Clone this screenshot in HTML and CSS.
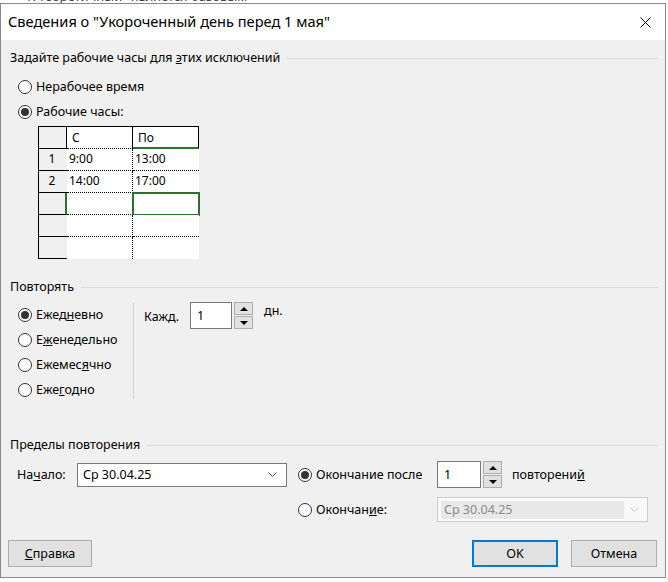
FILE: index.html
```html
<!DOCTYPE html>
<html lang="ru">
<head>
<meta charset="utf-8">
<title>Сведения</title>
<link rel="stylesheet" href="styles.css">
</head>
<body>
<div class="behind"><span>"К теоретичный" является базовым</span></div>
<div class="dialog">
  <div class="titlebar">
    <div class="title">Сведения о "Укороченный день перед 1 мая"</div>
    <svg class="close" width="11" height="11" viewBox="0 0 11 11"><path d="M0.5 0.5L10.5 10.5M10.5 0.5L0.5 10.5" stroke="#000" stroke-width="1" fill="none"/></svg>
  </div>
  <div class="body">
    <div class="group-head"><span>Задайте рабочие часы для <u>э</u>тих исключений</span><i class="rule"></i></div>
    <div class="radios g1">
      <div class="radio"><span class="dot"></span>Нерабочее время</div>
      <div class="radio on"><span class="dot"></span>Рабочие часы:</div>
    </div>
    <div class="grid">
      <div class="c corner"></div>
      <div class="c hd">С</div>
      <div class="c hd last sel-col">По</div>

      <div class="c rh">1</div>
      <div class="c d">9:00</div>
      <div class="c d last">13:00</div>

      <div class="c rh">2</div>
      <div class="c d">14:00</div>
      <div class="c d last">17:00</div>

      <div class="c rh sel-row"></div>
      <div class="c d"></div>
      <div class="c d last sel"></div>

      <div class="c rh"></div>
      <div class="c d"></div>
      <div class="c d last"></div>

      <div class="c rh"></div>
      <div class="c d bottom"></div>
      <div class="c d last bottom"></div>
    </div>

    <div class="group-head g2h"><span>Повторять</span><i class="rule"></i></div>
    <div class="repeat">
      <div class="radios g2">
        <div class="radio on"><span class="dot"></span>Ежед<u>н</u>евно</div>
        <div class="radio"><span class="dot"></span>Е<u>ж</u>енедельно</div>
        <div class="radio"><span class="dot"></span>Ежемес<u>я</u>чно</div>
        <div class="radio"><span class="dot"></span>Еже<u>г</u>одно</div>
      </div>
      <div class="vsep"></div>
      <div class="every">
        <span class="every-lbl">Кажд.</span>
        <div class="num w42">1</div>
        <div class="spin"><b class="up"></b><b class="down"></b></div>
        <span class="unit">дн.</span>
      </div>
    </div>

    <div class="group-head g3h"><span>Пределы повторения</span><i class="rule"></i></div>
    <div class="row r1">
      <span class="start-lbl">На<u>ч</u>ало:</span>
      <div class="combo"><span>Ср 30.04.25</span><svg class="chev" width="9" height="6" viewBox="0 0 9 6"><path d="M0.5 0.5L4.5 4.5L8.5 0.5" stroke="#555" fill="none"/></svg></div>
      <div class="radio on wide"><span class="dot"></span>Окончание после</div>
      <div class="num w44">1</div>
      <div class="spin"><b class="up"></b><b class="down"></b></div>
      <span class="unit2">повторени<u>й</u></span>
    </div>
    <div class="row r2">
      <div class="radio wide"><span class="dot"></span>Окончан<u>и</u>е:</div>
      <div class="combo disabled"><span class="ghost">Ср 30.04.25</span><svg class="chev" width="9" height="6" viewBox="0 0 9 6"><path d="M0.5 0.5L4.5 4.5L8.5 0.5" stroke="#c4c4c4" fill="none"/></svg></div>
    </div>

    <div class="buttons">
      <button class="btn"><u>С</u>правка</button>
      <div class="right">
        <button class="btn ok">OK</button>
        <button class="btn">Отмена</button>
      </div>
    </div>
  </div>
</div>
</body>
</html>
```

FILE: styles.css
```css
html, body {
  margin: 0;
  padding: 0;
}
body {
  width: 668px;
  height: 582px;
  overflow: hidden;
  background: #fff;
  font-family: "Noto Sans", "Open Sans", sans-serif;
  font-size: 12.5px;
  color: #000;
}
.behind {
  height: 3px;
  overflow: hidden;
  padding-left: 22px;
}
.behind span {
  display: block;
  margin-top: -10px;
  font-size: 13px;
  line-height: 13px;
  color: #444;
}
.dialog {
  width: 666px;
  height: 575px;
  box-sizing: border-box;
  border: 1px solid #8a8a8a;
  background: #f0f0f0;
  display: flex;
  flex-direction: column;
}
.titlebar {
  height: 36px;
  flex: none;
  background: #fff;
  display: flex;
  align-items: center;
  justify-content: space-between;
  padding: 0 14px 0 7px;
}
.title {
  font-size: 14.6px;
  line-height: 18px;
  margin-top: -2px;
}
.close {
  display: block;
}
.body {
  flex: 1;
  padding: 10px 8px 0 7px;
}
.group-head {
  display: flex;
  align-items: center;
  height: 16px;
  line-height: 16px;
  padding-left: 2px;
}
.group-head span {
  white-space: nowrap;
}
.group-head .rule {
  flex: 1;
  height: 1px;
  background: #dcdcdc;
  margin-left: 7px;
  margin-right: -1px;
}
.radios.g1 {
  margin-top: 8px;
  padding-left: 10px;
}
.radio {
  display: flex;
  align-items: center;
  height: 25px;
  white-space: nowrap;
}
.dot {
  width: 14px;
  height: 14px;
  box-sizing: border-box;
  border: 1px solid #333;
  border-radius: 50%;
  background: #fff;
  margin-right: 4px;
  display: flex;
  align-items: center;
  justify-content: center;
  flex: none;
}
.radio.on .dot::after {
  content: "";
  width: 8px;
  height: 8px;
  border-radius: 50%;
  background: #333;
}

/* grid */
.grid {
  margin-top: 2px;
  margin-left: 30px;
  width: 160px;
  border-top: 1px solid #000;
  border-left: 1px solid #000;
  display: grid;
  grid-template-columns: 28px 66px 66px;
  grid-auto-rows: 22px;
  background: #fff;
  font-size: 12px;
}
.c {
  box-sizing: border-box;
  line-height: 20px;
  white-space: nowrap;
}
.corner {
  background: #f0f0f0;
  border-right: 1px solid #000;
  border-bottom: 1px solid #000;
}
.hd {
  background: #fff;
  border-right: 1px solid #000;
  border-bottom: 1px dotted #000;
  padding-left: 5px;
  line-height: 22px;
}
.hd.sel-col {
  border-bottom: 2px solid #2f6e33;
}
.rh {
  background: #f0f0f0;
  border-bottom: 1px solid #000;
  text-align: center;
  padding-right: 2px;
}
.rh.sel-row {
  border-right: 2px solid #2f6e33;
}
.d {
  background: #fff;
  border-bottom: 1px dotted #000;
  border-right: 1px dotted #000;
  padding-left: 2px;
}
.d.last {
  border-right: none;
}
.d.bottom {
  border-bottom: none;
}
.d.sel {
  outline: 2px solid #2f6e33;
  outline-offset: -1px;
}

/* repeat */
.g2h {
  margin-top: 20px;
}
.repeat {
  display: flex;
  margin-top: 7px;
  height: 100px;
}
.radios.g2 {
  width: 115px;
  padding-left: 10px;
}
.vsep {
  width: 1px;
  height: 96px;
  margin-top: 1px;
  background: #d6d6d6;
}
.every {
  display: flex;
  align-items: flex-start;
  padding-left: 10px;
}
.every-lbl {
  line-height: 27px;
  margin-right: 11px;
  padding-top: 1px;
}
.num {
  height: 27px;
  box-sizing: border-box;
  border: 1px solid #7a7a7a;
  background: #fff;
  padding-left: 6px;
  line-height: 25px;
}
.num.w42 {
  width: 42px;
}
.num.w44 {
  width: 44px;
}
.spin {
  width: 19px;
  height: 27px;
  margin-left: 2px;
  display: flex;
  flex-direction: column;
  gap: 1px;
}
.spin b {
  flex: 1;
  box-sizing: border-box;
  border: 1px solid #adadad;
  background: #e1e1e1;
  display: flex;
  align-items: center;
  justify-content: center;
}
.spin b::after {
  content: "";
  width: 0;
  height: 0;
  border-left: 4px solid transparent;
  border-right: 4px solid transparent;
}
.spin b.up::after {
  border-bottom: 4px solid #000;
}
.spin b.down::after {
  border-top: 4px solid #000;
}
.unit {
  margin-left: 11px;
  line-height: 18px;
}

/* range */
.g3h {
  margin-top: 35px;
}
.row {
  display: flex;
  align-items: center;
  height: 27px;
  margin-top: 8px;
}
.start-lbl {
  padding-left: 9px;
  width: 68px;
  box-sizing: border-box;
  margin-right: 1px;
  white-space: nowrap;
}
.combo {
  width: 210px;
  height: 24px;
  box-sizing: border-box;
  border: 1px solid #7a7a7a;
  background: #fff;
  display: flex;
  align-items: center;
  justify-content: space-between;
  padding: 0 9px 0 5px;
}
.combo .chev {
  display: block;
}
.radio.wide {
  width: 139px;
  flex: none;
}
.r1 .radio.wide {
  margin-left: 11px;
}
.unit2 {
  margin-left: 10px;
  margin-top: -1px;
}
.r2 .radio.wide {
  margin-left: 290px;
}
.combo.disabled {
  width: 211px;
  height: 25px;
  border-color: #cccccc;
  background: #f9f9f9;
  padding: 0 8px 0 3px;
}
.ghost {
  background: #e8e8e8;
  color: #8a8a8a;
  width: 183px;
  height: 18px;
  line-height: 18px;
  padding-left: 3px;
  box-sizing: border-box;
}

/* buttons */
.buttons {
  display: flex;
  justify-content: space-between;
  margin-top: 17px;
}
.right {
  display: flex;
  gap: 13px;
}
.btn {
  font: inherit;
  color: #000;
  height: 27px;
  width: 84px;
  box-sizing: border-box;
  border: 1px solid #adadad;
  background: #e1e1e1;
  padding: 0;
  line-height: 25px;
  margin: 0;
}
.right .btn {
  width: 86px;
}
.btn.ok {
  border: 2px solid #0078d7;
  line-height: 23px;
}
```
